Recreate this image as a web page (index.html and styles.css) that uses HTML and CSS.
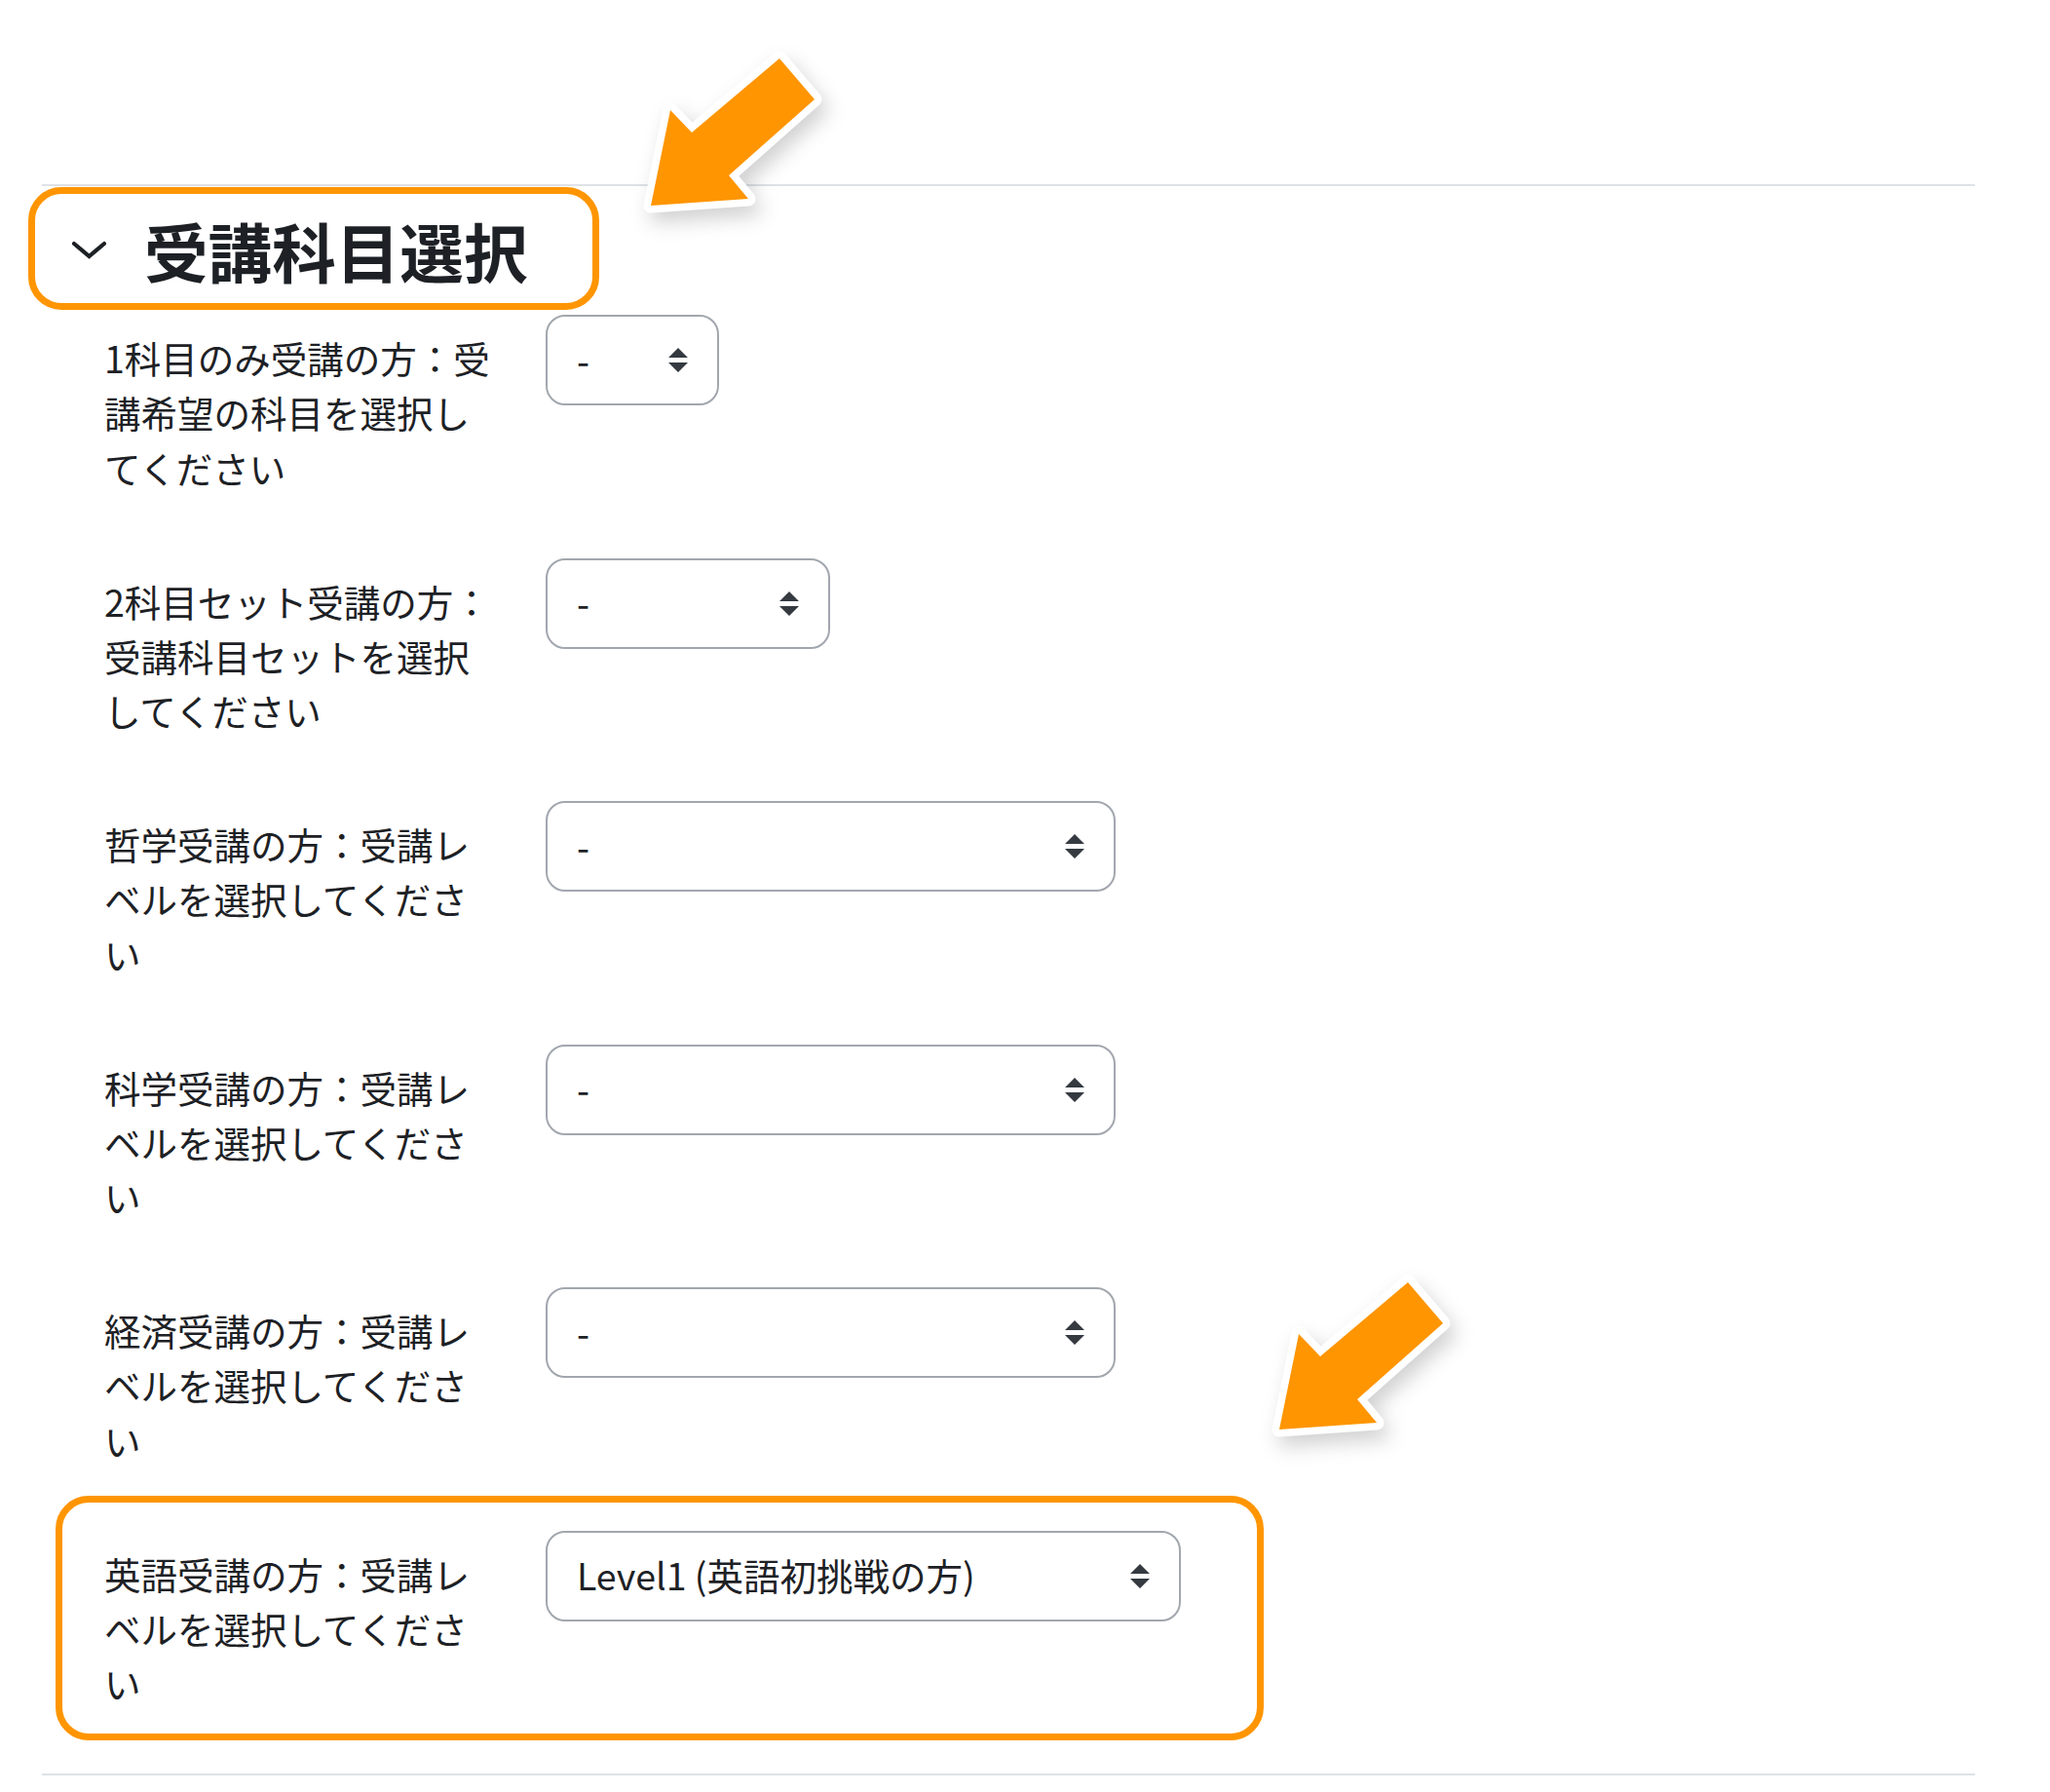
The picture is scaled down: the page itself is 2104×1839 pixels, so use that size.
FILE: index.html
```html
<!DOCTYPE html>
<html lang="ja">
<head>
<meta charset="utf-8">
<title>受講科目選択</title>
<link rel="stylesheet" href="styles.css">
</head>
<body>
<div class="page">
  <div class="prev-section"></div>
  <fieldset class="section">
    <div class="legend">
      <svg class="chevron" viewBox="0 0 35 20"><polyline points="2,3 17.5,16 33,3"/></svg>
      <h3 class="title">受講科目選択</h3>
    </div>

    <div class="row">
      <div class="label-col"><label class="label">1科目のみ受講の方：受講希望の科目を選択してください</label></div>
      <div class="select w1"><span class="value">-</span><svg class="updown" viewBox="0 0 4 5"><path d="M2 0L0 2h4zm0 5L0 3h4z"/></svg></div>
    </div>

    <div class="row">
      <div class="label-col"><label class="label">2科目セット受講の方：受講科目セットを選択してください</label></div>
      <div class="select w2"><span class="value">-</span><svg class="updown" viewBox="0 0 4 5"><path d="M2 0L0 2h4zm0 5L0 3h4z"/></svg></div>
    </div>

    <div class="row">
      <div class="label-col"><label class="label">哲学受講の方：受講レベルを選択してください</label></div>
      <div class="select w3"><span class="value">-</span><svg class="updown" viewBox="0 0 4 5"><path d="M2 0L0 2h4zm0 5L0 3h4z"/></svg></div>
    </div>

    <div class="row">
      <div class="label-col"><label class="label">科学受講の方：受講レベルを選択してください</label></div>
      <div class="select w3"><span class="value">-</span><svg class="updown" viewBox="0 0 4 5"><path d="M2 0L0 2h4zm0 5L0 3h4z"/></svg></div>
    </div>

    <div class="row">
      <div class="label-col"><label class="label">経済受講の方：受講レベルを選択してください</label></div>
      <div class="select w3"><span class="value">-</span><svg class="updown" viewBox="0 0 4 5"><path d="M2 0L0 2h4zm0 5L0 3h4z"/></svg></div>
    </div>

    <div class="row">
      <div class="label-col"><label class="label">英語受講の方：受講レベルを選択してください</label></div>
      <div class="select w4"><span class="value">Level1 (英語初挑戦の方)</span><svg class="updown" viewBox="0 0 4 5"><path d="M2 0L0 2h4zm0 5L0 3h4z"/></svg></div>
    </div>
  </fieldset>
</div>

<div class="highlight hl-heading"></div>
<div class="highlight hl-english"></div>

<svg class="arrow arrow-top" viewBox="0 0 200 180"><polygon points="13,167 33,69 55,92 145,16 181,58 93,136 113,160"/></svg>
<svg class="arrow arrow-bottom" viewBox="0 0 200 180"><polygon points="13,167 33,69 55,92 145,16 181,58 93,136 113,160"/></svg>
</body>
</html>
```

FILE: styles.css
```css
html, body {
  margin: 0;
  padding: 0;
  background: #ffffff;
}

body {
  position: relative;
  width: 2104px;
  height: 1839px;
  overflow: hidden;
  font-family: "Noto Sans CJK JP", "Noto Sans", sans-serif;
  color: #1d2125;
}

.page {
  padding-left: 43px;
  width: 1984px;
}

.prev-section {
  height: 189px;
  border-bottom: 2px solid #dee2e6;
}

.section {
  margin: 0;
  padding: 0;
  border: 0;
  border-bottom: 2px solid #dee2e6;
  min-width: 0;
}

.legend {
  display: flex;
  align-items: center;
  height: 79px;
  margin-top: 26px;
  margin-bottom: 27px;
  padding-left: 31px;
}

.chevron {
  width: 35px;
  height: 20px;
  margin-right: 39px;
  fill: none;
  stroke: #1d2125;
  stroke-width: 4.2;
  stroke-linecap: round;
  stroke-linejoin: miter;
}

.title {
  margin: 0;
  font-size: 65.6px;
  font-weight: 700;
  line-height: 79px;
  letter-spacing: 0;
}

.row {
  display: flex;
  align-items: flex-start;
  padding-left: 64px;
  margin-bottom: 64.75px;
}

.label-col {
  flex: none;
  width: 453px;
  padding-top: 16px;
}

.label {
  display: block;
  width: 405px;
  font-size: 37.5px;
  line-height: 56.25px;
}

.select {
  flex: none;
  display: flex;
  align-items: center;
  box-sizing: border-box;
  height: 93px;
  padding: 0 30px;
  border: 2px solid #a2a7ae;
  border-radius: 20px;
  font-size: 37.5px;
  color: #1d2125;
  background: #ffffff;
}

.value {
  flex: 1;
  white-space: nowrap;
  padding-bottom: 3px;
}

.updown {
  flex: none;
  width: 20px;
  height: 25px;
  fill: #343a40;
}

.w1 { width: 178px; }
.w2 { width: 292px; }
.w3 { width: 585px; }
.w4 { width: 652px; }

.highlight {
  position: absolute;
  box-sizing: border-box;
  border: 7px solid #ff9500;
  border-radius: 34px;
}

.hl-heading {
  left: 29px;
  top: 192px;
  width: 586px;
  height: 126px;
}

.hl-english {
  left: 57px;
  top: 1535px;
  width: 1240px;
  height: 251px;
}

.arrow {
  position: absolute;
  width: 200px;
  height: 180px;
  overflow: visible;
  filter: drop-shadow(6px 10px 10px rgba(0, 0, 0, 0.18));
}

.arrow polygon {
  fill: #ff9500;
  stroke: #ffffff;
  stroke-width: 15;
  stroke-linejoin: round;
  paint-order: stroke fill;
}

.arrow-top {
  left: 655px;
  top: 44px;
}

.arrow-bottom {
  left: 1300px;
  top: 1300px;
}
```
